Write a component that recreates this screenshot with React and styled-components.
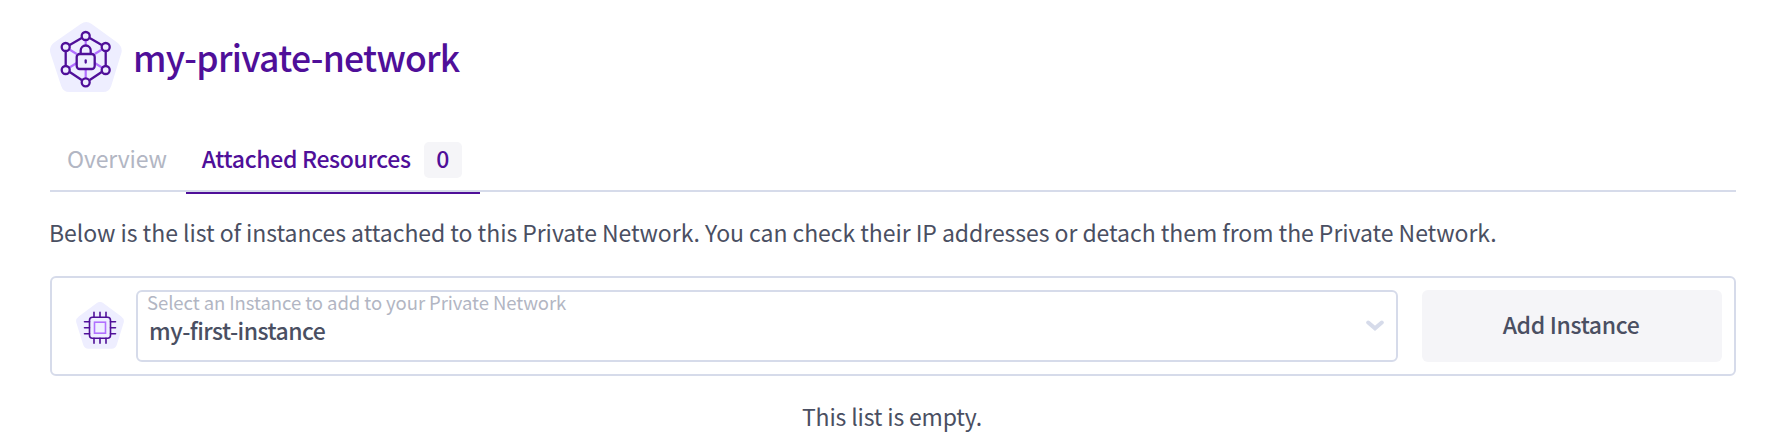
import React from "react";
import styled, { createGlobalStyle, css } from "styled-components";

const colors = {
  primary: "#4f0f99",
  accent: "#b170ff",
  tint: "#eeeeff",
  border: "#d6dbea",
  muted: "#b2b6c3",
  text: "#4a4f62",
  surface: "#f5f5f8",
};

const GlobalStyle = createGlobalStyle`
  * { box-sizing: border-box; }
  body {
    margin: 0;
    background: #fff;
    color: ${colors.text};
    font-family: "Noto Sans CJK SC", "Noto Sans", sans-serif;
    font-size: 23px;
  }
`;

const Page = styled.main`
  display: flex;
  flex-direction: column;
  padding: 20px 38px 0 50px;
`;

const Header = styled.header`
  display: flex;
  align-items: center;
  gap: 10px;
  height: 74px;
`;

const Title = styled.h1`
  margin: 0;
  font-size: 35.5px;
  font-weight: 500;
  line-height: 44px;
  letter-spacing: -0.72px;
  white-space: nowrap;
  color: ${colors.primary};
`;

const TabList = styled.nav`
  display: flex;
  height: 62px;
  margin-top: 36px;
  border-bottom: 2px solid ${colors.border};
`;

const Tab = styled.button`
  display: flex;
  align-items: center;
  gap: 13px;
  height: 64px;
  padding: 0 19px 2px 17px;
  border: 0;
  border-bottom: 2px solid transparent;
  background: none;
  font: inherit;
  font-weight: 400;
  line-height: 30px;
  letter-spacing: -0.15px;
  white-space: nowrap;
  color: ${colors.muted};
  ${(p) =>
    p.$active &&
    css`
      padding-left: 16px;
      padding-right: 18px;
      font-weight: 500;
      letter-spacing: -0.33px;
      color: ${colors.primary};
      border-bottom-color: ${colors.primary};
    `}
`;

const TabLabel = styled.span`
  padding-bottom: 4px;
`;

const Badge = styled.span`
  display: flex;
  justify-content: center;
  width: 38px;
  height: 36px;
  padding-bottom: 4px;
  border-radius: 5px;
  line-height: 32px;
  background: ${colors.surface};
`;

const Description = styled.p`
  margin: 24px 0 0 -1px;
  line-height: 32px;
  letter-spacing: -0.05px;
  white-space: nowrap;
`;

const AddPanel = styled.section`
  display: flex;
  align-items: center;
  height: 100px;
  margin-top: 28px;
  padding: 0 12px 0 24px;
  border: 2px solid ${colors.border};
  border-radius: 6px;
`;

const SelectField = styled.div`
  display: flex;
  flex: 1;
  align-items: center;
  justify-content: space-between;
  height: 72px;
  margin: 0 24px 0 12px;
  padding: 0 12px 0 9px;
  border: 2px solid ${colors.border};
  border-radius: 6px;
`;

const SelectText = styled.div`
  display: flex;
  flex-direction: column;
  align-self: flex-start;
`;

const SelectLabel = styled.span`
  line-height: 20px;
  font-size: 18.5px;
  letter-spacing: -0.07px;
  white-space: nowrap;
  color: ${colors.muted};
`;

const SelectValue = styled.span`
  padding-left: 2px;
  line-height: 36px;
  font-weight: 500;
  letter-spacing: -0.53px;
  white-space: nowrap;
`;

const AddButton = styled.button`
  width: 300px;
  height: 72px;
  padding: 0 2px 4px 0;
  border: 0;
  border-radius: 6px;
  background: ${colors.surface};
  color: inherit;
  font: inherit;
  font-weight: 500;
  letter-spacing: -0.35px;
`;

const EmptyMessage = styled.p`
  margin: 24px 2px 0 0;
  line-height: 32px;
  letter-spacing: -0.17px;
  text-align: center;
`;

const NetworkIcon = () => (
  <svg width="73" height="74" viewBox="0.3 0 73 74" fill="none">
    <path
      d="M31 4Q36.500 0 42 4L67.500 22.500Q73.500 27 71.500 33.500L61.500 66Q59.500 72 53.500 72H19.500Q13.500 72 11.500 66L.8 33.500Q-1.200 27 4.500 22.500Z"
      fill={colors.tint}
    />
    <g stroke={colors.accent} strokeWidth="2.2">
      <path d="M19 29L27 34M19 48L27 43M53 29L45 34M53 48L45 43M36 20V25M36 49V58" />
    </g>
    <g stroke={colors.primary} strokeWidth="2.3">
      <path d="M32 18L20 25M40 18L52 25M16 31V46M56 31V46M20 52L32 60M52 52L40 60" />
      <circle cx="36" cy="16" r="4" />
      <circle cx="16" cy="27" r="4" />
      <circle cx="56" cy="27" r="4" />
      <circle cx="16" cy="50" r="4" />
      <circle cx="56" cy="50" r="4" />
      <circle cx="36" cy="62.300" r="4" />
      <path d="M31 34V30.500A5 5 0 0 1 41 30.500V34" />
      <rect x="27" y="34" width="18" height="15" rx="3" />
      <path d="M36 40.500V42.500" strokeLinecap="round" />
    </g>
  </svg>
);

const InstanceIcon = () => (
  <svg width="48" height="48" viewBox="0 0.8 48 48" fill="none">
    <path
      d="M20.500 2Q24 -.600 27.500 2L45 15Q49 18 47.500 22L40.800 43.500Q39.500 47.500 35.500 47.500H12.500Q8.500 47.500 7.200 43.500L.5 22Q-1 18 3 15Z"
      fill={colors.tint}
    />
    <g stroke={colors.primary} strokeWidth="1.600" strokeLinecap="round">
      <rect x="13.500" y="16" width="21" height="21" rx="3" />
      <path d="M18 16V11M24 16V11M30 16V11M18 37V42M24 37V42M30 37V42M13.500 20.500H8.500M13.500 26.500H8.500M13.500 32.500H8.500M34.500 20.500H39.500M34.500 26.500H39.500M34.500 32.500H39.500" />
    </g>
    <rect x="18.500" y="21" width="11" height="11" stroke={colors.accent} strokeWidth="1.600" />
  </svg>
);

const Chevron = () => (
  <svg width="18" height="12" viewBox="0 0 18 12" fill="none">
    <path
      d="M2.200 2.500L9 8.300L15.800 2.500"
      stroke={colors.border}
      strokeWidth="4"
      strokeLinecap="round"
    />
  </svg>
);

export default function App() {
  return (
    <>
      <GlobalStyle />
      <Page>
        <Header>
          <NetworkIcon />
          <Title>my-private-network</Title>
        </Header>
        <TabList>
          <Tab>
            <TabLabel>Overview</TabLabel>
          </Tab>
          <Tab $active>
            <TabLabel>Attached Resources</TabLabel>
            <Badge>0</Badge>
          </Tab>
        </TabList>
        <Description>
          Below is the list of instances attached to this Private Network. You can check their IP
          addresses or detach them from the Private Network.
        </Description>
        <AddPanel>
          <InstanceIcon />
          <SelectField>
            <SelectText>
              <SelectLabel>Select an Instance to add to your Private Network</SelectLabel>
              <SelectValue>my-first-instance</SelectValue>
            </SelectText>
            <Chevron />
          </SelectField>
          <AddButton>Add Instance</AddButton>
        </AddPanel>
        <EmptyMessage>This list is empty.</EmptyMessage>
      </Page>
    </>
  );
}
